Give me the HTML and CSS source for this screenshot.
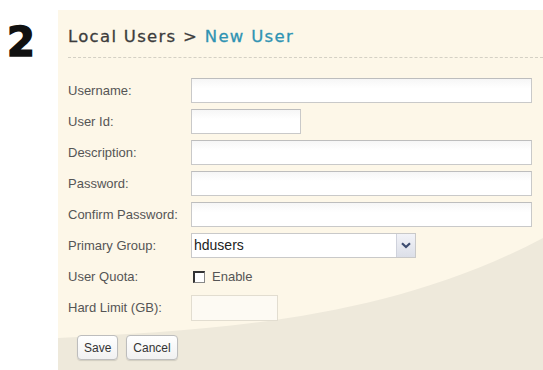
FILE: index.html
```html
<!DOCTYPE html>
<html lang="en">
<head>
  <meta charset="UTF-8">
  <title>Local Users - New User</title>
  <link rel="stylesheet" href="styles.css">
</head>
<body>
  <div class="step">2</div>

  <div class="panel">
    <h1 class="title">Local Users &gt; <span class="current">New User</span></h1>

    <form class="user-form">
      <label>Username:</label>
      <input type="text" class="field wide">

      <label>User Id:</label>
      <input type="text" class="field short">

      <label>Description:</label>
      <input type="text" class="field wide">

      <label>Password:</label>
      <input type="password" class="field wide">

      <label>Confirm Password:</label>
      <input type="password" class="field wide">

      <label>Primary Group:</label>
      <div class="select">
        <span class="select-value">hdusers</span>
        <span class="select-arrow">
          <svg width="10" height="7" viewBox="0 0 10 7"><path d="M1 1.2 L5 5 L9 1.2" fill="none" stroke="#3d4c70" stroke-width="2.2"/></svg>
        </span>
      </div>

      <label>User Quota:</label>
      <div class="check">
        <span class="box"></span>
        <span>Enable</span>
      </div>

      <label>Hard Limit (GB):</label>
      <input type="text" class="field tiny" disabled>
    </form>

    <div class="actions">
      <button type="button">Save</button>
      <button type="button">Cancel</button>
    </div>
  </div>
</body>
</html>
```

FILE: styles.css
```css
body {
  margin: 0;
  padding: 0;
  display: flex;
  background-color: white;
  font-family: "Liberation Sans", Arial, sans-serif;
  height: 370px;
  overflow: hidden;
}

.step {
  width: 51px;
  padding: 22px 0 0 7px;
  font-family: "DejaVu Sans", sans-serif;
  font-weight: bold;
  font-size: 40px;
  line-height: 1;
  color: #111;
  -webkit-text-stroke: 1.6px #111;
}

.panel {
  flex: 1;
  margin-top: 10px;
  padding: 0 0 0 10px;
  height: 360px;
  box-sizing: border-box;
  background: #fdf7e8 url("data:image/svg+xml,%3Csvg xmlns='http://www.w3.org/2000/svg' viewBox='0 0 485 360' preserveAspectRatio='none'%3E%3Cpath d='M0 328 C 160 320, 330 310, 485 228 L485 360 L0 360 Z' fill='%23eee9db'/%3E%3C/svg%3E") no-repeat 0 0 / 100% 100%;
}

.title {
  margin: 0;
  padding: 18px 0 11px 0;
  font-family: "DejaVu Sans", sans-serif;
  font-size: 16.5px;
  letter-spacing: 1.3px;
  line-height: 18px;
  font-weight: normal;
  color: #3c3c3c;
  border-bottom: 1px dashed #d4d0c4;
  -webkit-text-stroke: 0.3px #3c3c3c;
}

.title .current {
  color: #2f93b3;
  -webkit-text-stroke: 0.3px #2f93b3;
}

.user-form {
  display: grid;
  grid-template-columns: 123px 1fr;
  grid-auto-rows: 25px;
  row-gap: 6px;
  margin-top: 20px;
  padding-right: 11px;
  align-items: center;
}

.user-form label {
  font-size: 13px;
  color: #555;
}

.field {
  height: 25px;
  box-sizing: border-box;
  border: 1px solid #c9c9c9;
  border-top-color: #bdbdbd;
  background: linear-gradient(#f6f6f6, #ffffff 40%);
  margin: 0;
  padding: 0 4px;
}

.wide {
  width: 341px;
}

.short {
  width: 110px;
}

.tiny {
  width: 87px;
  height: 26px;
  background: #fdfaf3;
  border-color: #e2ddd0;
}

.select {
  width: 225px;
  height: 25px;
  box-sizing: border-box;
  display: flex;
  border: 1px solid #c9c9c9;
  background: white;
}

.select-value {
  flex: 1;
  padding-left: 2px;
  font-size: 14px;
  line-height: 23px;
  color: #222;
}

.select-arrow {
  width: 18px;
  display: flex;
  align-items: center;
  justify-content: center;
  border-left: 1px solid #cfd2dc;
  background: linear-gradient(#f2f3f8, #dcdfe8);
}

.check {
  display: flex;
  align-items: center;
  gap: 7px;
  padding-left: 2px;
  font-size: 13px;
  color: #555;
}

.box {
  width: 12px;
  height: 12px;
  box-sizing: border-box;
  border: 1px solid #888;
  border-top: 2px solid #333;
  border-left: 2px solid #333;
  background: white;
}

.actions {
  display: flex;
  gap: 8px;
  margin-top: 15px;
  padding-left: 9px;
}

.actions button {
  height: 25px;
  padding: 0 6px;
  font-family: "Liberation Sans", Arial, sans-serif;
  font-size: 12px;
  color: #333;
  background: linear-gradient(#ffffff, #f1f1f1);
  border: 1px solid #bdbdbd;
  border-radius: 4px;
  box-shadow: 0 1px 1px rgba(0,0,0,0.12);
}
```
